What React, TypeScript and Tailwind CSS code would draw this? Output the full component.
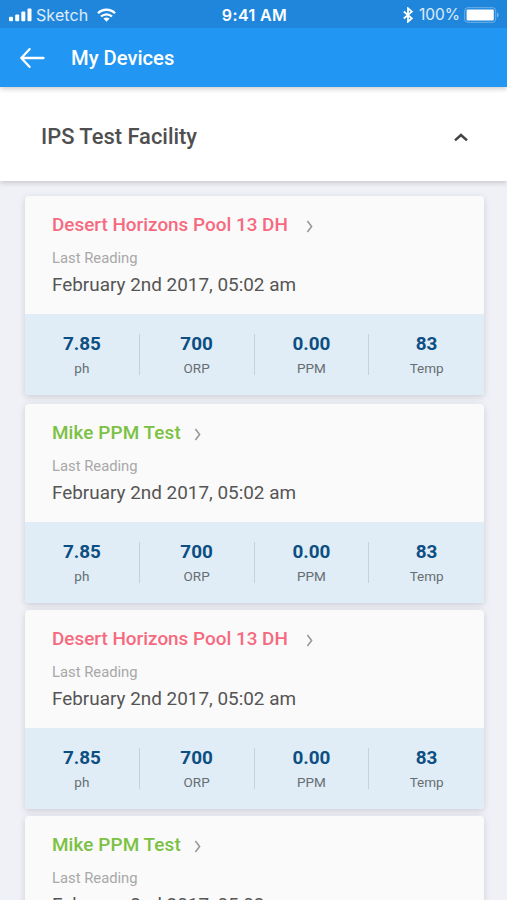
import { clsx } from "clsx";

type Device = { name: string; ok: boolean; spacing: string };

const devices: Device[] = [
  { name: "Desert Horizons Pool 13 DH", ok: false, spacing: "mt-0" },
  { name: "Mike PPM Test", ok: true, spacing: "mt-[9px]" },
  { name: "Desert Horizons Pool 13 DH", ok: false, spacing: "mt-[7px]" },
  { name: "Mike PPM Test", ok: true, spacing: "mt-[7px]" },
];

const readings = [
  { value: "7.85", label: "ph" },
  { value: "700", label: "ORP" },
  { value: "0.00", label: "PPM" },
  { value: "83", label: "Temp" },
];

// --- STATUS BAR ---
const StatusBar = () => (
  <div className="grid h-7 grid-cols-[1fr_auto_1fr] items-center bg-[#1f86dc] pl-[9px] pr-[7px] pt-[2px] font-[Inter,sans-serif] text-white">
    <div className="flex items-center">
      <svg width="23" height="14" viewBox="0 0 23 14" fill="currentColor">
        <rect x="0" y="8.7" width="4" height="4.6" rx="1" />
        <rect x="6.2" y="6.5" width="4" height="6.8" rx="1" />
        <rect x="12.3" y="3.5" width="4" height="9.8" rx="1" />
        <rect x="18.5" y="0.5" width="4" height="12.8" rx="1" />
      </svg>
      <span className="ml-1 text-[16px] leading-none tracking-[0.1px] text-white/85">Sketch</span>
      <svg className="ml-[9px]" width="19" height="14" viewBox="0 0 19 14" fill="none" stroke="currentColor" strokeWidth="2.3">
        <path d="M1 5.2C5.7 0.6 13.3 0.6 18 5.2" />
        <path d="M4 8.5C7 5.6 12 5.6 15 8.5" />
        <path d="M9.5 13.8 6.4 10.6C8.2 9 10.8 9 12.6 10.6Z" fill="currentColor" stroke="none" />
      </svg>
    </div>
    <div className="text-[16px] font-semibold leading-none tracking-[0.4px]">9:41 AM</div>
    <div className="flex items-center justify-end">
      <svg width="10" height="16" viewBox="0 0 10 16" fill="none" stroke="currentColor" strokeWidth="1.8">
        <path d="M0.8 4.5 8.8 11.3 5 14.7V1.3L8.8 4.7 0.8 11.5" />
      </svg>
      <span className="ml-[6px] text-[15.5px] leading-none text-white/85">100%</span>
      <svg className="ml-1" width="36" height="16" viewBox="0 0 36 16">
        <rect x="0.7" y="0.7" width="31" height="14.6" rx="3" fill="none" stroke="#fff" strokeOpacity="0.35" />
        <rect x="2.6" y="2.6" width="27.2" height="10.8" rx="1" fill="#fff" />
        <path d="M33 5.5c2.2 1 2.2 4 0 5z" fill="#fff" fillOpacity="0.4" />
      </svg>
    </div>
  </div>
);

const DeviceCard = ({ device }: { device: Device }) => (
  <article className={clsx("h-[199px] shrink-0 overflow-hidden rounded-[4px] bg-[#fafafa] shadow-[0_2px_6px_rgba(60,70,90,0.2)]", device.spacing)}>
    <div className="h-[118px] pl-[27px] pt-[17px]">
      <div className={clsx("flex items-center", device.ok ? "gap-[13px] tracking-[0.1px]" : "gap-[18px]")}>
        <h2 className={clsx("text-[18.9px] font-medium leading-[23px]", device.ok ? "text-[#7bc143]" : "text-[#f6697f]")}>{device.name}</h2>
        <svg className="mt-[3px]" width="8" height="13" viewBox="0 0 8 13" fill="none" stroke="#999" strokeWidth="1.6">
          <path d="M1.4 1 5.6 6.5 1.4 12" />
        </svg>
      </div>
      <p className="mt-[13px] text-[14.8px] leading-[18px] text-[#a8a8a8]">Last Reading</p>
      <p className="mt-[6px] text-[18.9px] leading-[24px] text-[#555]">February 2nd 2017, 05:02 am</p>
    </div>
    <div className="grid h-[81px] grid-cols-4 bg-[#e1edf6] pt-[20px]">
      {readings.map((r, i) => (
        <div key={r.label} className={clsx("h-[41px] text-center", i < 3 && "border-r-[1.5px] border-[#c6d1d9]")}>
          <div className="text-[18.9px] font-bold leading-[20px] text-[#0d4f83]">{r.value}</div>
          <div className="mt-[6px] text-[13.5px] leading-[17px] text-[#666d73]">{r.label}</div>
        </div>
      ))}
    </div>
  </article>
);

export default function App() {
  return (
    <main className="flex h-[900px] w-[507px] flex-col overflow-hidden bg-[#f0f1f6] font-[Roboto,sans-serif]">
      <header className="relative z-20 shrink-0 bg-[#2196f3] shadow-[0_2px_5px_rgba(0,0,0,0.2)]">
        <StatusBar />
        <div className="flex h-[59px] items-center pl-5">
          <svg width="25" height="20" viewBox="0 0 25 20" fill="none" stroke="#fff" strokeWidth="2.3" strokeLinecap="round" strokeLinejoin="round">
            <path d="M9.5 1.2 1.3 10 9.5 18.8M1.3 10H23.5" />
          </svg>
          <h1 className="ml-[26px] pt-px text-[20.2px] font-medium leading-none text-white">My Devices</h1>
        </div>
      </header>

      <section className="relative z-10 flex h-[94px] shrink-0 items-center justify-between bg-white pl-[41px] pr-[39px] pt-[6px] shadow-[0_2px_5px_rgba(0,0,0,0.17)]">
        <h2 className="pb-[2px] text-[21.9px] font-medium leading-[33px] text-[#4f4f4f]">IPS Test Facility</h2>
        <svg width="14" height="9" viewBox="0 0 14 9" fill="none" stroke="#444" strokeWidth="2.5">
          <path d="M1 7.4 7 2 13 7.4" />
        </svg>
      </section>

      <div className="flex flex-col pl-[25px] pr-[23px] pt-[15px]">
        {devices.map((device, i) => (
          <DeviceCard key={i} device={device} />
        ))}
      </div>
    </main>
  );
}
